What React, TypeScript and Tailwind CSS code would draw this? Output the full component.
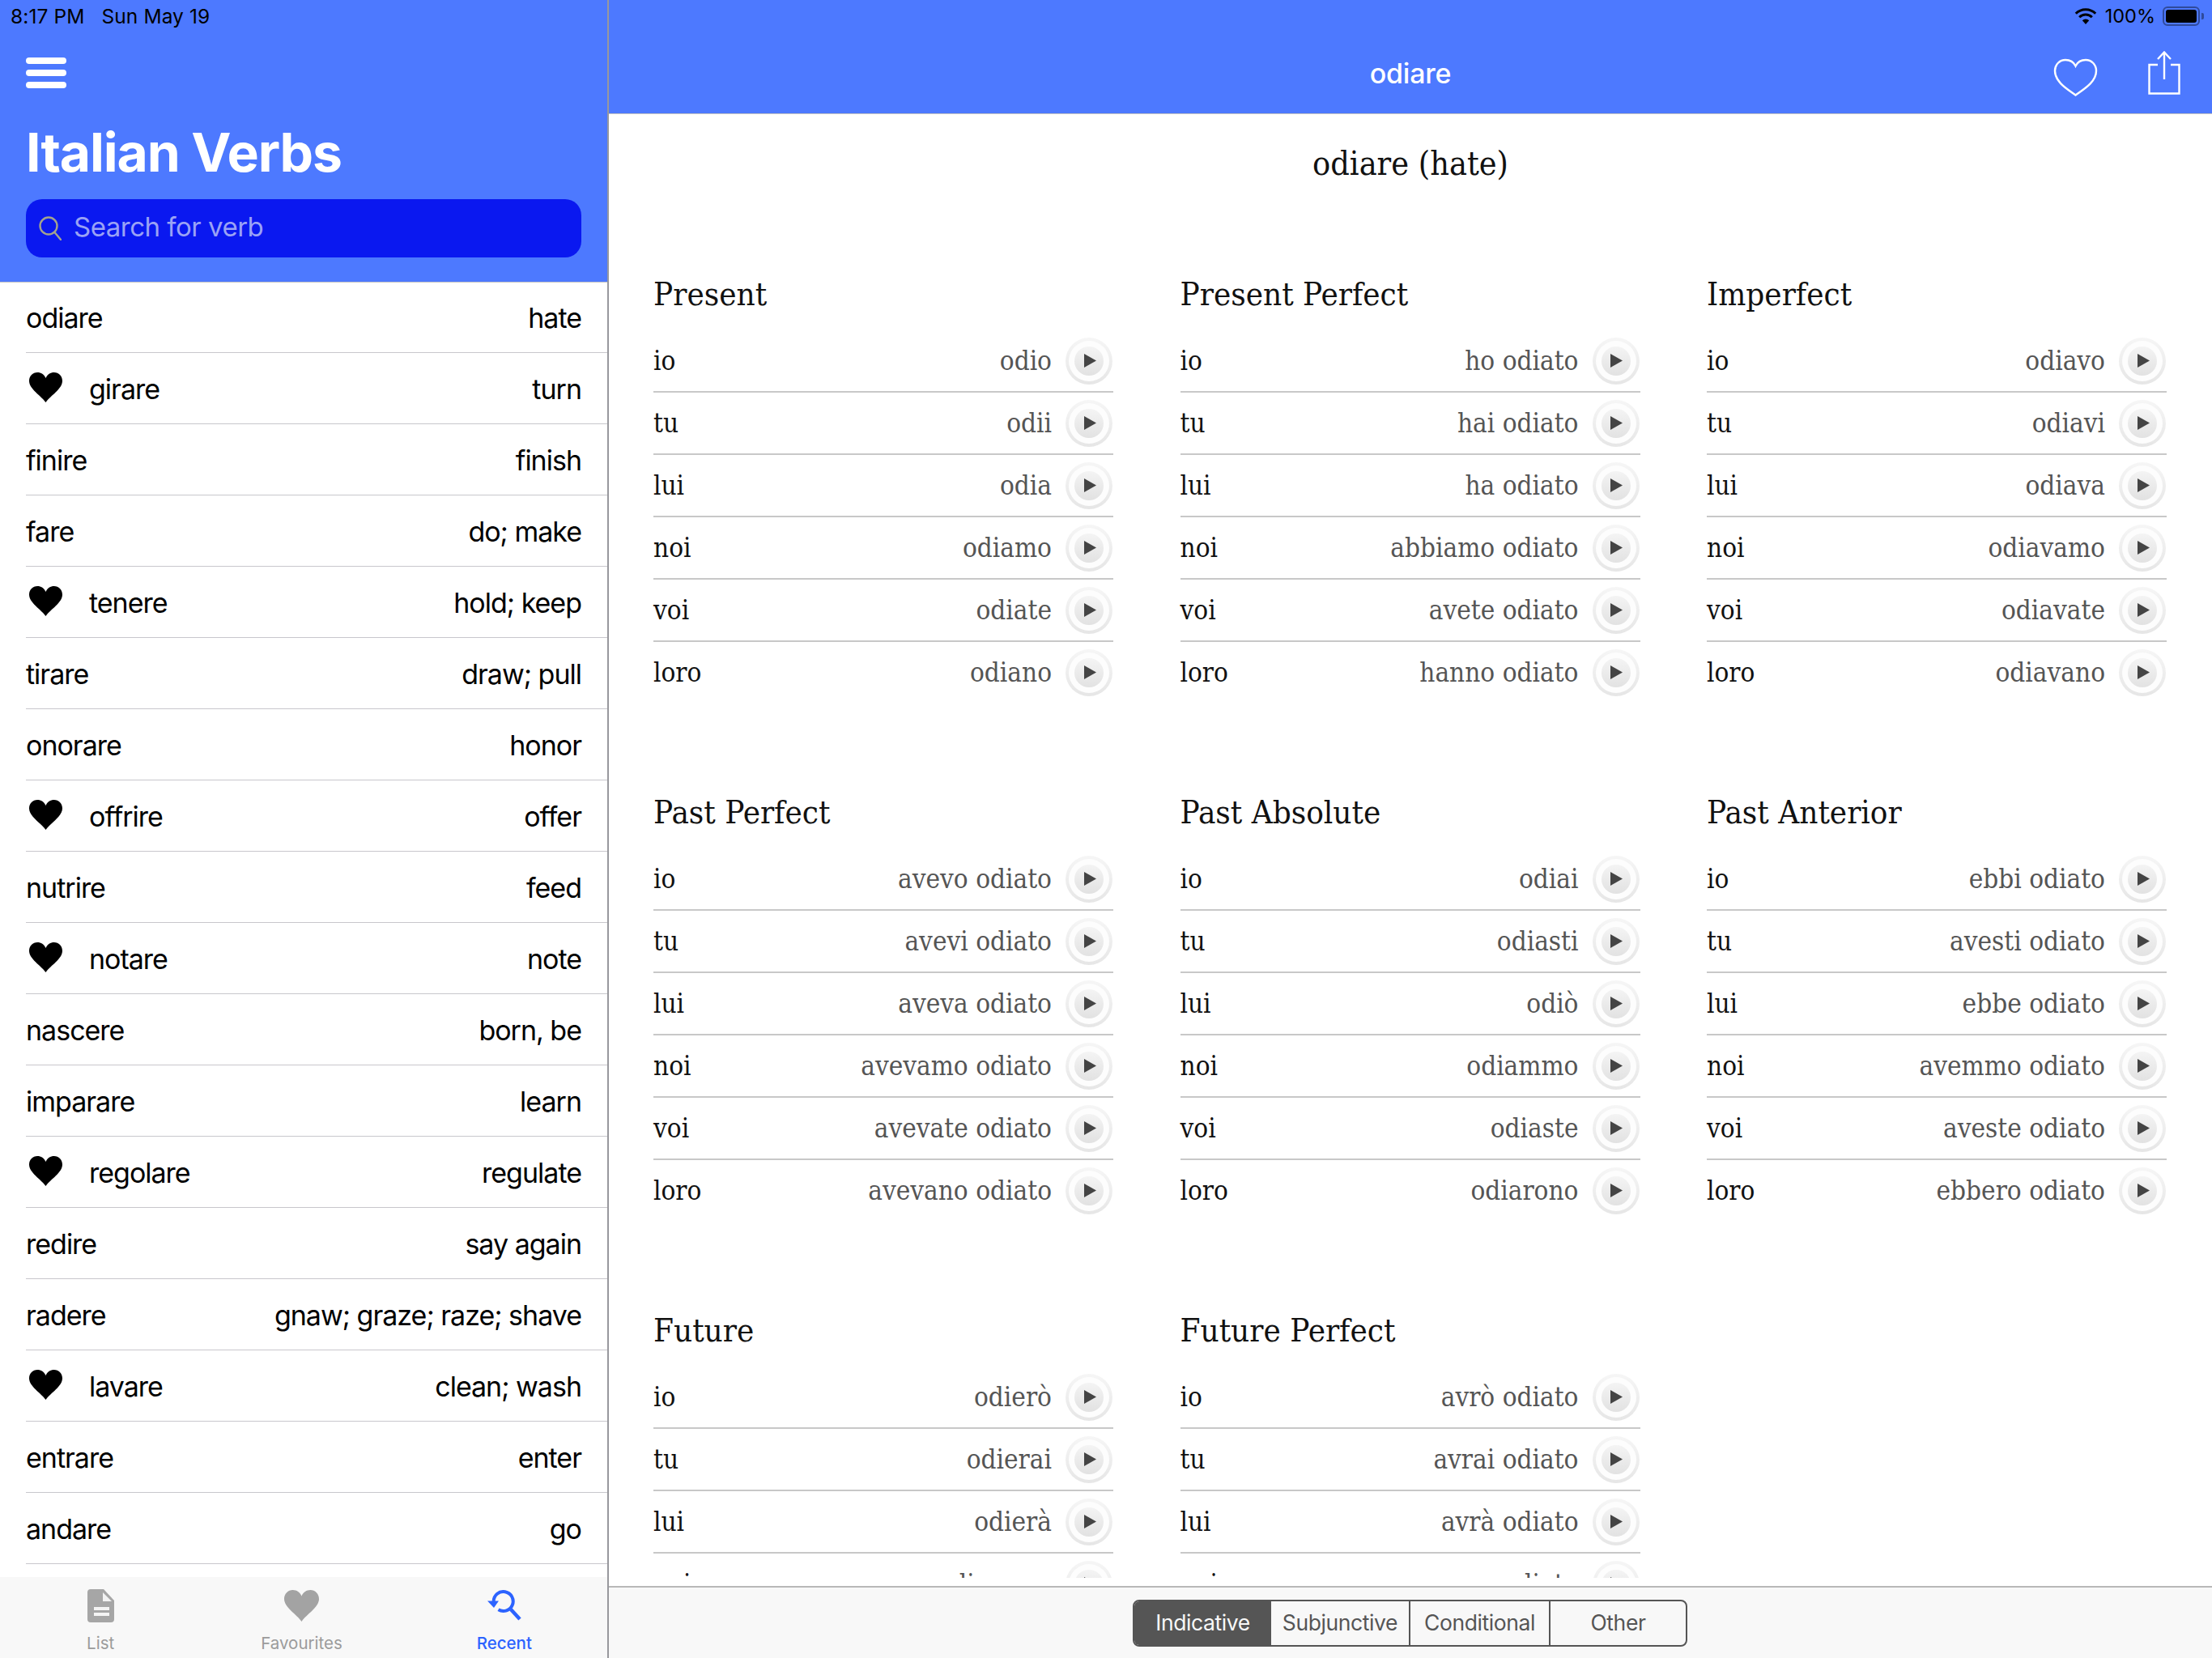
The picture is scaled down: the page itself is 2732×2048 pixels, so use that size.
import React from "react";

const verbs: [string, string, boolean][] = [
  ["odiare", "hate", false],
  ["girare", "turn", true],
  ["finire", "finish", false],
  ["fare", "do; make", false],
  ["tenere", "hold; keep", true],
  ["tirare", "draw; pull", false],
  ["onorare", "honor", false],
  ["offrire", "offer", true],
  ["nutrire", "feed", false],
  ["notare", "note", true],
  ["nascere", "born, be", false],
  ["imparare", "learn", false],
  ["regolare", "regulate", true],
  ["redire", "say again", false],
  ["radere", "gnaw; graze; raze; shave", false],
  ["lavare", "clean; wash", true],
  ["entrare", "enter", false],
  ["andare", "go", false],
];

const pronouns = ["io", "tu", "lui", "noi", "voi", "loro"];

const tenses: [string, string[]][] = [
  ["Present", ["odio", "odii", "odia", "odiamo", "odiate", "odiano"]],
  ["Present Perfect", ["ho odiato", "hai odiato", "ha odiato", "abbiamo odiato", "avete odiato", "hanno odiato"]],
  ["Imperfect", ["odiavo", "odiavi", "odiava", "odiavamo", "odiavate", "odiavano"]],
  ["Past Perfect", ["avevo odiato", "avevi odiato", "aveva odiato", "avevamo odiato", "avevate odiato", "avevano odiato"]],
  ["Past Absolute", ["odiai", "odiasti", "odiò", "odiammo", "odiaste", "odiarono"]],
  ["Past Anterior", ["ebbi odiato", "avesti odiato", "ebbe odiato", "avemmo odiato", "aveste odiato", "ebbero odiato"]],
  ["Future", ["odierò", "odierai", "odierà", "odieremo", "odierete", "odieranno"]],
  ["Future Perfect", ["avrò odiato", "avrai odiato", "avrà odiato", "avremo odiato", "avrete odiato", "avranno odiato"]],
];

const HEART =
  "M20.5 37C14.5 28.5 0 20.5 0 10.5C0 4.5 4.5 0 10.2 0C14.6 0 18.6 2.6 20.5 7C22.4 2.6 26.4 0 30.8 0C36.5 0 41 4.5 41 10.5C41 20.5 26.5 28.5 20.5 37Z";

function Heart({ className }: { className: string }) {
  return (
    <svg viewBox="0 0 41 37" className={className} fill="currentColor">
      <path d={HEART} />
    </svg>
  );
}

function Play() {
  return (
    <div className="w-[58px] h-[58px] shrink-0 rounded-full bg-gradient-to-b from-[#f6f6f6] to-[#e6e6e6] flex items-center justify-center">
      <div className="w-[50px] h-[50px] rounded-full bg-[#fdfdfd] flex items-center justify-center">
        <div className="w-[36px] h-[36px] rounded-full bg-gradient-to-b from-[#f4f4f4] to-[#e2e2e2] flex items-center justify-center">
          <svg viewBox="0 0 15 17" className="w-[15px] h-[17px] ml-[2px]">
            <path d="M0 0L15 8.5L0 17Z" fill="#444444" />
          </svg>
        </div>
      </div>
    </div>
  );
}

function Tense({ name, forms }: { name: string; forms: string[] }) {
  return (
    <section>
      <h2 className="text-[40px] leading-[48px] mb-[21px] text-[#111111]">{name}</h2>
      {forms.map((f, i) => (
        <div
          key={i}
          className={`h-[77px] flex items-center border-b-2 ${i === 5 ? "border-transparent" : "border-[#c8c8c8]"}`}
        >
          <span className="text-[33px] leading-[42px] text-[#111111]">{pronouns[i]}</span>
          <span className="ml-auto text-[33px] leading-[42px] text-[#555555] mr-[17px]">{f}</span>
          <div className="mr-px">
            <Play />
          </div>
        </div>
      ))}
    </section>
  );
}

function StatusLeft() {
  return (
    <div className="h-[40px] pl-[13px] flex items-center text-[24.5px] text-black gap-[21px] tracking-[0.1px]">
      <span>8:17 PM</span>
      <span>Sun May 19</span>
    </div>
  );
}

function StatusRight() {
  return (
    <div className="h-[40px] pr-[10px] flex items-center justify-end text-[23.5px] text-black">
      <svg viewBox="0 0 28 20" className="w-[28px] h-[20px] mr-[10px]">
        <path d="M14 20L9.8 15.2A6 6 0 0 1 18.2 15.2Z" fill="black" />
        <path d="M6.2 11.2A11 11 0 0 1 21.8 11.2" fill="none" stroke="black" strokeWidth="3" />
        <path d="M1.8 6.8A17.2 17.2 0 0 1 26.2 6.8" fill="none" stroke="black" strokeWidth="3" />
      </svg>
      <span>100%</span>
      <div className="ml-[9px] w-[46px] h-[24px] rounded-[6px] border-2 border-[#2f4a9c] p-[2px]">
        <div className="w-full h-full rounded-[3px] bg-black" />
      </div>
      <div className="ml-[2px] w-[3px] h-[8px] rounded-r-[2px] bg-[#2f4a9c]" />
    </div>
  );
}

function Tab({ label, active, children }: { label: string; active?: boolean; children: React.ReactNode }) {
  return (
    <div className={`flex-1 flex flex-col items-center ${active ? "text-[#2c63ff] pl-[2px]" : "text-[#9b9b9b]"}`}>
      <div className="h-[58px] mt-[6px] flex items-center justify-center">{children}</div>
      <span className={`text-[20.5px] leading-[24px] mt-[6px] ${active ? "font-medium" : ""}`}>{label}</span>
    </div>
  );
}

const SEGMENTS: [string, string][] = [
  ["Indicative", "w-[169px] bg-[#555555] text-[#f8f8f8]"],
  ["Subjunctive", "w-[170px] text-[#555555]"],
  ["Conditional", "w-[173px] text-[#555555] border-l-2 border-[#555555]"],
  ["Other", "flex-1 text-[#555555] border-l-2 border-[#555555]"],
];

export default function App() {
  return (
    <div className="w-[2732px] h-[2048px] flex overflow-hidden bg-white font-['Inter',sans-serif]">
      <aside className="w-[752px] h-full shrink-0 flex flex-col border-r-2 border-[#98989d]">
        <header className="h-[349px] shrink-0 bg-[#4d79ff] border-b border-[#c4c4c4]">
          <StatusLeft />
          <div className="pl-[32px] pt-[31px] flex flex-col gap-[7px]">
            <div className="w-[50px] h-[8px] rounded-full bg-white" />
            <div className="w-[50px] h-[8px] rounded-full bg-white" />
            <div className="w-[50px] h-[8px] rounded-full bg-white" />
          </div>
          <h1 className="pl-[32px] mt-[39px] text-[66px] leading-[80px] font-bold text-white tracking-[-1.1px]">
            Italian Verbs
          </h1>
          <div className="mx-[32px] mt-[18px] h-[72px] rounded-[20px] bg-[#0a18f0] flex items-center pl-[16px]">
            <svg viewBox="0 0 28 30" className="w-[28px] h-[30px]" fill="none" stroke="#a3a38e" strokeWidth="2.4">
              <circle cx="12" cy="12" r="10.5" />
              <path d="M19.5 20L27 29" strokeLinecap="round" />
            </svg>
            <span className="ml-[15px] -mt-[2px] text-[33px] text-[#9aa2f5] tracking-[-0.5px]">Search for verb</span>
          </div>
        </header>
        <div className="flex-1 overflow-hidden">
          {verbs.map(([v, t, fav], i) => (
            <div key={v} className={`${i === 0 ? "h-[87px]" : "h-[88px]"} pl-[32px] flex`}>
              <div className="flex-1 flex items-center border-b border-[#c8c7cc] pr-[32px] pt-[1px] text-[34px] text-black tracking-[-1px]">
                {fav && <Heart className="w-[41px] h-[37px] ml-[4px] mr-[33px] -mt-[4px]" />}
                <span>{v}</span>
                <span className="ml-auto">{t}</span>
              </div>
            </div>
          ))}
        </div>
        <nav className="h-[100px] shrink-0 bg-[#f8f8f8] flex pr-[3px]">
          <Tab label="List">
            <svg viewBox="0 0 33 41" className="w-[33px] h-[41px]">
              <path
                d="M4 0H20L33 14V37A4 4 0 0 1 29 41H4A4 4 0 0 1 0 37V4A4 4 0 0 1 4 0Z"
                fill="#a6a6a6"
              />
              <path d="M19 4L30 15H19Z" fill="#f2f2f2" />
              <rect x="8" y="22" width="19" height="4" fill="#f4f4f4" />
              <rect x="8" y="29" width="19" height="4" fill="#f4f4f4" />
            </svg>
          </Tab>
          <Tab label="Favourites">
            <Heart className="w-[43px] h-[39px] text-[#a3a3a3]" />
          </Tab>
          <Tab label="Recent" active>
            <svg viewBox="0 0 42 38" className="w-[42px] h-[38px]" fill="none" stroke="#2c63ff" strokeWidth="4">
              <path d="M7.7 14A12 12 0 1 1 13.5 24.3" />
              <path d="M29 24L40 36" strokeWidth="4.5" />
              <path d="M0 13.5H14L8 22Z" fill="#2c63ff" stroke="none" />
            </svg>
          </Tab>
        </nav>
      </aside>

      <main className="flex-1 h-full flex flex-col min-w-0">
        <header className="h-[141px] shrink-0 bg-[#4d79ff] border-b border-[#c4c4c4]">
          <StatusRight />
          <div className="relative h-[100px] flex items-center justify-center">
            <span className="text-[34px] font-medium text-white tracking-[-0.2px]">odiare</span>
            <div className="absolute right-[39px] top-[19px] flex items-start gap-[62px]">
              <svg viewBox="0 0 55 48" className="w-[55px] h-[48px] mt-[13px]" fill="none" stroke="white" strokeWidth="2.4">
                <path d="M27.5 45.5C18 38.5 2 29.5 2 15.5C2 7.5 8 2 15 2C20 2 25 4.5 27.5 9.5C30 4.5 35 2 40 2C47 2 53 7.5 53 15.5C53 29.5 37 38.5 27.5 45.5Z" />
              </svg>
              <svg viewBox="0 0 40 54" className="w-[40px] h-[54px] mt-[4px]" fill="none" stroke="white" strokeWidth="2.4">
                <path d="M12 17H1.5V52.5H38.5V17H28" />
                <path d="M20 1.5V35" />
                <path d="M12 10L20 1.5L28 10" />
              </svg>
            </div>
          </div>
        </header>

        <div className="flex-1 min-h-0 overflow-hidden font-['DejaVu_Serif_Condensed','DejaVu_Serif',serif] font-light">
          <h1 className="pt-[37px] text-center text-[41px] leading-[48px] text-[#111111]">odiare (hate)</h1>
          <div className="mt-[113px] px-[55px] grid grid-cols-[568px_568px_568px] gap-x-[82.5px] gap-y-[109px]">
            {tenses.map(([n, f]) => (
              <Tense key={n} name={n} forms={f} />
            ))}
          </div>
        </div>

        <div className="mt-[10px] h-[89px] shrink-0 bg-[#f8f8f8] border-t-2 border-[#b8b8b8] flex items-center justify-center">
          <div className="-ml-[1px] w-[685px] h-[58px] rounded-[8px] border-2 border-[#555555] flex overflow-hidden text-[26.5px] tracking-[-0.4px]">
            {SEGMENTS.map(([s, c]) => (
              <div key={s} className={`flex items-center justify-center ${c}`}>
                {s}
              </div>
            ))}
          </div>
        </div>
      </main>
    </div>
  );
}
